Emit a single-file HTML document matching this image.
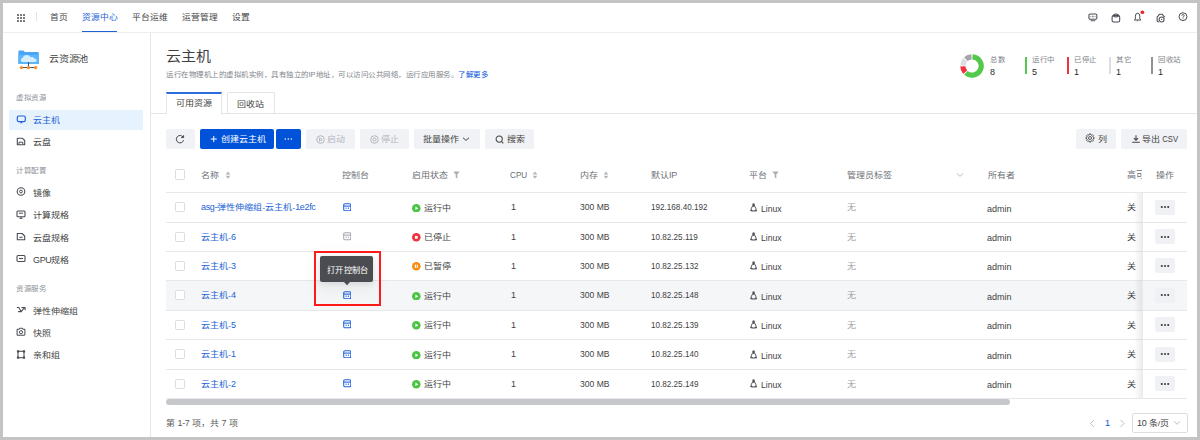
<!DOCTYPE html>
<html lang="zh-CN"><head><meta charset="utf-8">
<style>
*{margin:0;padding:0;box-sizing:border-box;}
html,body{width:1200px;height:440px;overflow:hidden;background:#c4c4c4;}
body{font-family:"Liberation Sans",sans-serif;color:#333;position:relative;}
.a{position:absolute;white-space:nowrap;}
.s{position:absolute;white-space:nowrap;transform:scale(.75);transform-origin:0 0;}
#frame{position:absolute;left:3px;top:3px;width:1194px;height:434px;background:#fff;}
.btn{position:absolute;top:129px;height:20px;background:#f1f2f5;border-radius:2px;}
.cb{position:absolute;left:175px;width:10px;height:10px;border:1px solid #dcdde1;border-radius:1.5px;background:#fff;}
.lt{display:inline-block;transform:scaleY(1.22);transform-origin:0 88%;letter-spacing:-0.45px;}
.dots{position:absolute;left:1155px;width:20px;height:15px;background:#f0f1f4;border-radius:2px;}
</style></head><body>
<div id="frame"></div>

<div class="a" style="left:3px;top:32px;width:1194px;height:1px;background:#eceef1;"></div>
<svg class="a" style="left:17px;top:13.5px;" width="8" height="8" viewBox="0 0 8 8"><g fill="#5a5a5a"><rect x="0.1" y="0.1" width="1.8" height="1.8" rx="0.4"/><rect x="3.1" y="0.1" width="1.8" height="1.8" rx="0.4"/><rect x="6.1" y="0.1" width="1.8" height="1.8" rx="0.4"/><rect x="0.1" y="3.1" width="1.8" height="1.8" rx="0.4"/><rect x="3.1" y="3.1" width="1.8" height="1.8" rx="0.4"/><rect x="6.1" y="3.1" width="1.8" height="1.8" rx="0.4"/><rect x="0.1" y="6.1" width="1.8" height="1.8" rx="0.4"/><rect x="3.1" y="6.1" width="1.8" height="1.8" rx="0.4"/><rect x="6.1" y="6.1" width="1.8" height="1.8" rx="0.4"/></g></svg>
<div class="a" style="left:36px;top:12px;width:1px;height:9px;background:#e2e3e6;"></div>
<div class="s" style="left:49.5px;top:13.38px;font-size:11.7px;line-height:11.7px;color:#444;transform:scale(.75,0.6750);">首页</div>
<div class="s" style="left:82px;top:13.38px;font-size:11.7px;line-height:11.7px;color:#1a62d6;transform:scale(.75,0.6750);">资源中心</div>
<div class="s" style="left:132px;top:13.38px;font-size:11.7px;line-height:11.7px;color:#444;transform:scale(.75,0.6750);">平台运维</div>
<div class="s" style="left:182px;top:13.38px;font-size:11.7px;line-height:11.7px;color:#444;transform:scale(.75,0.6750);">运营管理</div>
<div class="s" style="left:232px;top:13.38px;font-size:11.7px;line-height:11.7px;color:#444;transform:scale(.75,0.6750);">设置</div>
<div class="a" style="left:82px;top:31px;width:35px;height:1.25px;background:#1f62d8;"></div>
<svg class="a" style="left:1087.5px;top:12.5px;" width="10" height="9" viewBox="0 0 10 9"><rect x="0.95" y="0.95" width="7.9" height="5.3" rx="1.3" fill="none" stroke="#4a4d55" stroke-width="1.05"/><rect x="2.6" y="6.2" width="4.7" height="2.1" fill="#7c7f86"/><path d="M2.3 3.6 H3.3 M6.5 3.6 H7.5" stroke="#4a4d55" stroke-width=".7"/><ellipse cx="4.9" cy="3.5" rx=".55" ry="1" fill="#4a4d55"/></svg>
<svg class="a" style="left:1110.5px;top:12.5px;" width="10" height="10" viewBox="0 0 10 10"><g fill="none" stroke="#4a4d55" stroke-width="1.05"><path d="M2.3 3.3 Q2.3 1 4.9 1 Q7.5 1 7.5 3.3"/><rect x="1.1" y="2.6" width="7.6" height="6.3" rx="1.4"/><path d="M2.5 3.3 Q4.9 4.6 7.3 3.3"/></g></svg>
<svg class="a" style="left:1133px;top:10px;" width="13" height="13" viewBox="0 0 13 13"><g fill="none" stroke="#4a4d55" stroke-width="1.0"><path d="M1.3 10 L2.4 8.8 V6.2 Q2.4 3.2 4.6 3.2 Q6.8 3.2 6.8 6.2 V8.8 L7.9 10 Z" stroke-linejoin="round"/></g><path d="M3.8 10.6 L4.6 11.5 L5.4 10.6 Z" fill="#4a4d55"/><circle cx="9.4" cy="2.25" r="1.85" fill="#f5222d"/></svg>
<svg class="a" style="left:1155.5px;top:12.5px;" width="10" height="10" viewBox="0 0 10 10"><g fill="none" stroke="#4a4d55" stroke-width="1.05"><path d="M3.2 9 Q1.1 9 1.1 7.6 V4.3 Q1.1 2.9 2.3 2.9 L3.3 1.3 H6.3 L7.5 2.9 Q8.6 2.9 8.6 4.3"/><circle cx="5.6" cy="6.4" r="2.5"/></g><path d="M4.9 6.4 h1.4" stroke="#4a4d55" stroke-width=".9"/></svg>
<svg class="a" style="left:1177.5px;top:12px;" width="10" height="10" viewBox="0 0 10 10"><circle cx="5" cy="4.65" r="3.95" fill="none" stroke="#4a4d55" stroke-width="1"/><path d="M3.8 3.7 Q3.8 2.5 5 2.5 Q6.2 2.5 6.2 3.6 Q6.2 4.3 5.4 4.7 Q5 4.9 5 5.6" fill="none" stroke="#4a4d55" stroke-width=".9"/><circle cx="5" cy="6.8" r=".5" fill="#4a4d55"/></svg>
<div class="a" style="left:150px;top:33px;width:1px;height:404px;background:#e6e7ea;"></div>
<svg class="a" style="left:17px;top:49px;" width="24" height="21" viewBox="0 0 24 21">
<path d="M1.4 2.4 Q1.4 1.4 2.4 1.4 H6.3 L7.8 2.9 H21 Q21.8 2.9 21.8 3.8 V14.4 Q21.8 15 21.2 15 H2 Q1.4 15 1.4 14.4 Z" fill="#4aa5f6"/>
<path d="M1.4 6 H21.8 V14.4 Q21.8 15 21.2 15 H2 Q1.4 15 1.4 14.4 Z" fill="#5db5fa"/>
<path d="M5.8 13 Q3.8 13 3.8 11.1 Q3.8 9.3 5.8 9.1 Q6.3 6.1 9.9 6.1 Q12.6 6.1 13.6 8.2 Q14.4 7.8 15.4 8 Q16.8 8.3 17.1 9.5 Q19.8 9.6 19.8 11.3 Q19.8 13 17.8 13 Z" fill="#d7eefe"/>
<path d="M11.5 13 V18.5 M4.5 18.5 H18.5" stroke="#4f545c" stroke-width="1.1" fill="none"/>
<circle cx="4.4" cy="18.6" r="1.65" fill="#ff8a1c"/><circle cx="11.5" cy="18.6" r="1.65" fill="#ff8a1c"/><circle cx="18.6" cy="18.6" r="1.65" fill="#ff8a1c"/>
</svg>
<div class="s" style="left:49px;top:55.1px;font-size:13.5px;line-height:13.5px;color:#3f3f3f;transform:scale(.75,0.6750);">云资源池</div>
<div class="a" style="left:9px;top:110px;width:134px;height:20px;background:#e6f3fe;border-radius:1px;"></div>
<div class="s" style="left:16px;top:95.04px;font-size:10px;line-height:10px;color:#8c9099;transform:scale(.75,0.6750);">虚拟资源</div>
<div class="s" style="left:32.6px;top:115.79px;font-size:12px;line-height:12px;color:#1a62d6;transform:scale(.75,0.6750);">云主机</div>
<div class="s" style="left:32.6px;top:138.28px;font-size:12px;line-height:12px;color:#3f3f3f;transform:scale(.75,0.6750);">云盘</div>
<div class="s" style="left:16px;top:168.04px;font-size:10px;line-height:10px;color:#8c9099;transform:scale(.75,0.6750);">计算配置</div>
<div class="s" style="left:32.6px;top:188.78px;font-size:12px;line-height:12px;color:#3f3f3f;transform:scale(.75,0.6750);">镜像</div>
<div class="s" style="left:32.6px;top:211.28px;font-size:12px;line-height:12px;color:#3f3f3f;transform:scale(.75,0.6750);">计算规格</div>
<div class="s" style="left:32.6px;top:233.78px;font-size:12px;line-height:12px;color:#3f3f3f;transform:scale(.75,0.6750);">云盘规格</div>
<div class="s" style="left:32.6px;top:255.78px;font-size:12px;line-height:12px;color:#3f3f3f;transform:scale(.75,0.6750);"><span class="lt">GPU</span>规格</div>
<div class="s" style="left:16px;top:285.54px;font-size:10px;line-height:10px;color:#8c9099;transform:scale(.75,0.6750);">资源服务</div>
<div class="s" style="left:32.6px;top:306.78px;font-size:12px;line-height:12px;color:#3f3f3f;transform:scale(.75,0.6750);">弹性伸缩组</div>
<div class="s" style="left:32.6px;top:328.78px;font-size:12px;line-height:12px;color:#3f3f3f;transform:scale(.75,0.6750);">快照</div>
<div class="s" style="left:32.6px;top:351.28px;font-size:12px;line-height:12px;color:#3f3f3f;transform:scale(.75,0.6750);">亲和组</div>
<svg class="a" style="left:16px;top:115.0px;" width="10" height="9" viewBox="0 0 10 9"><rect x="1.3" y="1" width="8" height="5.6" rx="1.4" fill="none" stroke="#1f5fd8" stroke-width="1.15"/><path d="M4 8.2 L5.3 6.6 L6.6 8.2 Z" fill="#1f5fd8"/></svg>
<svg class="a" style="left:16px;top:136.9px;" width="10" height="9" viewBox="0 0 10 9"><path d="M1.3 1.3 H6.5 L8.7 3.5 V7.7 H1.3 Z" fill="none" stroke="#4a4d55" stroke-width="1.1" stroke-linejoin="round"/><path d="M3 7.7 V5.2 H6.8 V7.7" fill="none" stroke="#4a4d55" stroke-width="1"/></svg>
<svg class="a" style="left:16px;top:187.4px;" width="10" height="9" viewBox="0 0 10 9"><circle cx="5" cy="4.5" r="3.8" fill="none" stroke="#4a4d55" stroke-width="1.1"/><circle cx="5" cy="4.5" r="1.4" fill="none" stroke="#4a4d55" stroke-width="1"/></svg>
<svg class="a" style="left:16px;top:209.9px;" width="10" height="9" viewBox="0 0 10 9"><rect x="1" y="1" width="8" height="5.8" rx="1" fill="none" stroke="#4a4d55" stroke-width="1.1"/><path d="M3.5 8.3 H6.5 M5 6.8 V8.3 M3 3.2 H7" stroke="#4a4d55" stroke-width="1"/></svg>
<svg class="a" style="left:16px;top:232.4px;" width="10" height="9" viewBox="0 0 10 9"><path d="M1.3 1.5 H6 L8.7 4 V7.7 H1.3 Z" fill="none" stroke="#4a4d55" stroke-width="1.1" stroke-linejoin="round"/><path d="M3.3 5.3 H6.7" stroke="#4a4d55" stroke-width="1"/></svg>
<svg class="a" style="left:16px;top:254.4px;" width="10" height="9" viewBox="0 0 10 9"><rect x="1" y="1.5" width="8" height="6" rx="1" fill="none" stroke="#4a4d55" stroke-width="1.1"/><path d="M3 4.5 H7" stroke="#4a4d55" stroke-width="1.1"/></svg>
<svg class="a" style="left:16px;top:305.4px;" width="10" height="9" viewBox="0 0 10 9"><path d="M0.9 2.4 H2.8 L5.2 6.6 M2.1 6.6 H5.5 M5.2 6.6 L8.4 2.6 M5.4 2.4 H9.1 V5.3" fill="none" stroke="#4a4d55" stroke-width="1.05" stroke-linejoin="round"/></svg>
<svg class="a" style="left:16px;top:327.4px;" width="10" height="9" viewBox="0 0 10 9"><path d="M1.1 3 Q1.1 2.3 1.8 2.3 H3 L3.8 1.2 H6.2 L7 2.3 H8.2 Q8.9 2.3 8.9 3 V7.6 Q8.9 8.2 8.2 8.2 H1.8 Q1.1 8.2 1.1 7.6 Z" fill="none" stroke="#4a4d55" stroke-width="1.05" stroke-linejoin="round"/><circle cx="5" cy="5.2" r="1.6" fill="none" stroke="#4a4d55" stroke-width="1"/></svg>
<svg class="a" style="left:16px;top:349.9px;" width="10" height="9" viewBox="0 0 10 9"><rect x="2" y="1.3" width="6" height="6.4" fill="none" stroke="#4a4d55" stroke-width="1.05"/><rect x="0.9" y="0.3" width="2.2" height="2.2" fill="#4a4d55"/><rect x="6.9" y="0.3" width="2.2" height="2.2" fill="#4a4d55"/><rect x="0.9" y="6.5" width="2.2" height="2.2" fill="#4a4d55"/><rect x="6.9" y="6.5" width="2.2" height="2.2" fill="#4a4d55"/></svg>
<div class="s" style="left:166px;top:49.98px;font-size:20px;line-height:20px;color:#3f3f3f;transform:scale(.75,0.6750);">云主机</div>
<div class="s" style="left:166px;top:71.54px;font-size:10px;line-height:10px;color:#80848b;transform:scale(.75,0.6750);">运行在物理机上的虚拟机实例，具有独立的IP地址，可以访问公共网络，运行应用服务。<span style="color:#0052d9">了解更多</span></div>
<svg class="a" style="left:959.2px;top:52.6px;" width="26" height="26" viewBox="0 0 26 26"><path d="M13.481 3.813 A9.2 9.2 0 1 1 6.844 19.837" fill="none" stroke="#52c94a" stroke-width="5.2"/><path d="M6.163 19.156 A9.2 9.2 0 0 1 3.813 13.481" fill="none" stroke="#f0313f" stroke-width="5.2"/><path d="M3.813 12.519 A9.2 9.2 0 0 1 6.163 6.844" fill="none" stroke="#dcdde1" stroke-width="5.2"/><path d="M6.844 6.163 A9.2 9.2 0 0 1 12.519 3.813" fill="none" stroke="#a3a5aa" stroke-width="5.2"/></svg>
<div class="s" style="left:990px;top:57.04px;font-size:10px;line-height:10px;color:#80848b;transform:scale(.75,0.6750);">总数</div>
<div class="s" style="left:990px;top:67.59px;font-size:12px;line-height:12px;color:#2a2a2a;transform:scale(.75,0.6750);font-weight:500;"><span class="lt">8</span></div>
<div class="a" style="left:1025px;top:57px;width:2px;height:17px;background:#52c94a;"></div>
<div class="s" style="left:1032px;top:57.04px;font-size:10px;line-height:10px;color:#80848b;transform:scale(.75,0.6750);">运行中</div>
<div class="s" style="left:1032px;top:67.59px;font-size:12px;line-height:12px;color:#2a2a2a;transform:scale(.75,0.6750);font-weight:500;"><span class="lt">5</span></div>
<div class="a" style="left:1067px;top:57px;width:2px;height:17px;background:#f0313f;"></div>
<div class="s" style="left:1074px;top:57.04px;font-size:10px;line-height:10px;color:#80848b;transform:scale(.75,0.6750);">已停止</div>
<div class="s" style="left:1074px;top:67.59px;font-size:12px;line-height:12px;color:#2a2a2a;transform:scale(.75,0.6750);font-weight:500;"><span class="lt">1</span></div>
<div class="a" style="left:1109px;top:57px;width:2px;height:17px;background:#dcdde1;"></div>
<div class="s" style="left:1116px;top:57.04px;font-size:10px;line-height:10px;color:#80848b;transform:scale(.75,0.6750);">其它</div>
<div class="s" style="left:1116px;top:67.59px;font-size:12px;line-height:12px;color:#2a2a2a;transform:scale(.75,0.6750);font-weight:500;"><span class="lt">1</span></div>
<div class="a" style="left:1151px;top:57px;width:2px;height:17px;background:#909297;"></div>
<div class="s" style="left:1158px;top:57.04px;font-size:10px;line-height:10px;color:#80848b;transform:scale(.75,0.6750);">回收站</div>
<div class="s" style="left:1158px;top:67.59px;font-size:12px;line-height:12px;color:#2a2a2a;transform:scale(.75,0.6750);font-weight:500;"><span class="lt">1</span></div>
<div class="a" style="left:151px;top:112.5px;width:1046px;height:1px;background:#e3e4e8;"></div>
<div class="a" style="left:166px;top:92px;width:56px;height:21.5px;background:#fff;border:1px solid #e3e4e8;border-bottom:none;border-top:2px solid #2a6ddb;"></div>
<div class="s" style="left:176px;top:99.39px;font-size:12px;line-height:12px;color:#3f3f3f;transform:scale(.75,0.6750);">可用资源</div>
<div class="a" style="left:227px;top:92.3px;width:48px;height:21px;background:#fff;border:1px solid #e3e4e8;border-bottom:none;border-radius:2px 2px 0 0;"></div>
<div class="s" style="left:236.5px;top:99.59px;font-size:12px;line-height:12px;color:#3f3f3f;transform:scale(.75,0.6750);">回收站</div>
<div class="btn" style="left:166px;width:28.5px;background:#f1f2f5;"></div>
<svg class="a" style="left:175px;top:134px;" width="10" height="10" viewBox="0 0 10 10"><path d="M8.1 3.1 A3.7 3.7 0 1 0 8.6 6.2" fill="none" stroke="#444" stroke-width="1"/><path d="M8.6 1.2 V3.6 H6.2" fill="none" stroke="#444" stroke-width="1"/></svg>
<div class="btn" style="left:199.7px;width:74.7px;background:#0052d9;"></div>
<svg class="a" style="left:210px;top:134px;" width="8" height="10" viewBox="0 0 8 10"><path d="M3.75 1.9 V8.1 M0.7 5 H6.8" stroke="#fff" stroke-width="1"/></svg>
<div class="s" style="left:221.3px;top:134.58px;font-size:12px;line-height:12px;color:#fff;transform:scale(.75,0.6750);">创建云主机</div>
<div class="btn" style="left:276px;width:24.7px;background:#0052d9;"></div>
<svg class="a" style="left:282px;top:136px;" width="13" height="6" viewBox="0 0 13 6"><circle cx="3.3" cy="3" r="0.8" fill="#fff"/><circle cx="6.3" cy="3" r="0.8" fill="#fff"/><circle cx="9.3" cy="3" r="0.8" fill="#fff"/></svg>
<div class="btn" style="left:306px;width:48.6px;background:#f1f2f5;"></div>
<svg class="a" style="left:315.5px;top:134.5px;" width="9" height="9" viewBox="0 0 9 9"><circle cx="4.5" cy="4.5" r="3.8" fill="none" stroke="#b3b6bd" stroke-width="1"/><path d="M3.5 2.8 L6.3 4.5 L3.5 6.2 Z" fill="none" stroke="#b3b6bd" stroke-width=".9" stroke-linejoin="round"/></svg>
<div class="s" style="left:327px;top:134.58px;font-size:12px;line-height:12px;color:#b3b6bd;transform:scale(.75,0.6750);">启动</div>
<div class="btn" style="left:360px;width:48.6px;background:#f1f2f5;"></div>
<svg class="a" style="left:369.5px;top:134.5px;" width="9" height="9" viewBox="0 0 9 9"><circle cx="4.5" cy="4.5" r="3.8" fill="none" stroke="#b3b6bd" stroke-width="1"/><circle cx="4.5" cy="4.5" r="1.6" fill="none" stroke="#b3b6bd" stroke-width="1"/></svg>
<div class="s" style="left:381px;top:134.58px;font-size:12px;line-height:12px;color:#b3b6bd;transform:scale(.75,0.6750);">停止</div>
<div class="btn" style="left:413.6px;width:66px;background:#f1f2f5;"></div>
<div class="s" style="left:423px;top:134.58px;font-size:12px;line-height:12px;color:#3f3f3f;transform:scale(.75,0.6750);">批量操作</div>
<svg class="a" style="left:461.5px;top:136px;" width="8" height="6" viewBox="0 0 8 6"><path d="M1 1.7 L4 4.4 L7 1.7" fill="none" stroke="#444" stroke-width="1"/></svg>
<div class="btn" style="left:485px;width:48.6px;background:#f1f2f5;"></div>
<svg class="a" style="left:494.5px;top:134.5px;" width="10" height="10" viewBox="0 0 10 10"><circle cx="4.2" cy="4.1" r="3.1" fill="none" stroke="#444" stroke-width="1.05"/><path d="M6.4 6.4 L8.3 8.3" stroke="#444" stroke-width="1.1"/></svg>
<div class="s" style="left:506.7px;top:134.58px;font-size:12px;line-height:12px;color:#3f3f3f;transform:scale(.75,0.6750);">搜索</div>
<div class="btn" style="left:1075.75px;width:40px;background:#f1f2f5;"></div>
<svg class="a" style="left:1085px;top:133.4px;" width="10" height="10" viewBox="0 0 10 10"><path d="M4.36 0.95 L5.64 0.95 L5.67 1.72 L6.85 2.21 L7.41 1.68 L8.32 2.59 L7.79 3.15 L8.28 4.33 L9.05 4.36 L9.05 5.64 L8.28 5.67 L7.79 6.85 L8.32 7.41 L7.41 8.32 L6.85 7.79 L5.67 8.28 L5.64 9.05 L4.36 9.05 L4.33 8.28 L3.15 7.79 L2.59 8.32 L1.68 7.41 L2.21 6.85 L1.72 5.67 L0.95 5.64 L0.95 4.36 L1.72 4.33 L2.21 3.15 L1.68 2.59 L2.59 1.68 L3.15 2.21 L4.33 1.72 Z" fill="none" stroke="#4a4a4a" stroke-width="0.95" stroke-linejoin="round"/><circle cx="5" cy="5" r="1.5" fill="none" stroke="#4a4a4a" stroke-width="0.9"/></svg>
<div class="s" style="left:1097.5px;top:134.58px;font-size:12px;line-height:12px;color:#3f3f3f;transform:scale(.75,0.6750);">列</div>
<div class="btn" style="left:1121px;width:66.4px;background:#f1f2f5;"></div>
<svg class="a" style="left:1130.5px;top:133.6px;" width="10" height="10" viewBox="0 0 10 10"><path d="M5 1.3 V6.2 M2.9 4.1 L5 6.2 L7.1 4.1 M1.2 8.3 H8.8" fill="none" stroke="#444" stroke-width="1.05"/></svg>
<div class="s" style="left:1142.3px;top:134.58px;font-size:12px;line-height:12px;color:#3f3f3f;transform:scale(.75,0.6750);">导出 <span style="display:inline-block;transform:scale(.86,1.22);transform-origin:0 88%;">CSV</span></div>
<div class="cb" style="top:169px;height:10.5px;"></div>
<div class="s" style="left:201.3px;top:170.78px;font-size:12px;line-height:12px;color:#6b6e75;transform:scale(.75,0.6750);">名称</div>
<svg class="a" style="left:224.5px;top:170.7px;" width="6" height="8.5" viewBox="0 0 6 8.5"><path d="M0.6 3.4 L3 0.4 L5.4 3.4 Z M0.6 4.7 L3 7.7 L5.4 4.7 Z" fill="#b3b6bc"/></svg>
<div class="s" style="left:342px;top:170.78px;font-size:12px;line-height:12px;color:#6b6e75;transform:scale(.75,0.6750);">控制台</div>
<div class="s" style="left:412px;top:170.78px;font-size:12px;line-height:12px;color:#6b6e75;transform:scale(.75,0.6750);">启用状态</div>
<svg class="a" style="left:452.8px;top:170.89999999999998px;" width="7" height="8" viewBox="0 0 7 8"><path d="M0.3 0.4 H6.7 L4.3 3.6 V7.4 L2.7 6.4 V3.6 Z" fill="#a9acb2"/></svg>
<div class="s" style="left:510px;top:169.75px;font-size:12px;line-height:12px;color:#6b6e75;transform:scale(0.6795,0.8250);">CPU</div>
<svg class="a" style="left:531.5px;top:170.7px;" width="6" height="8.5" viewBox="0 0 6 8.5"><path d="M0.6 3.4 L3 0.4 L5.4 3.4 Z M0.6 4.7 L3 7.7 L5.4 4.7 Z" fill="#b3b6bc"/></svg>
<div class="s" style="left:580px;top:170.78px;font-size:12px;line-height:12px;color:#6b6e75;transform:scale(.75,0.6750);">内存</div>
<svg class="a" style="left:602.5px;top:170.7px;" width="6" height="8.5" viewBox="0 0 6 8.5"><path d="M0.6 3.4 L3 0.4 L5.4 3.4 Z M0.6 4.7 L3 7.7 L5.4 4.7 Z" fill="#b3b6bc"/></svg>
<div class="s" style="left:651px;top:170.78px;font-size:12px;line-height:12px;color:#6b6e75;transform:scale(.75,0.6750);">默认<span class="lt">IP</span></div>
<div class="s" style="left:748.7px;top:170.78px;font-size:12px;line-height:12px;color:#6b6e75;transform:scale(.75,0.6750);">平台</div>
<svg class="a" style="left:772px;top:170.89999999999998px;" width="7" height="8" viewBox="0 0 7 8"><path d="M0.3 0.4 H6.7 L4.3 3.6 V7.4 L2.7 6.4 V3.6 Z" fill="#a9acb2"/></svg>
<div class="s" style="left:847.4px;top:170.78px;font-size:12px;line-height:12px;color:#6b6e75;transform:scale(.75,0.6750);">管理员标签</div>
<svg class="a" style="left:955.5px;top:171.7px;" width="8" height="6" viewBox="0 0 8 6"><path d="M1 1.5 L4 4.3 L7 1.5" fill="none" stroke="#b3b6bc" stroke-width=".9"/></svg>
<div class="s" style="left:987.7px;top:170.78px;font-size:12px;line-height:12px;color:#6b6e75;transform:scale(.75,0.6750);">所有者</div>
<div class="a" style="left:1127.3px;top:169.7px;width:15.2px;height:10px;overflow:hidden;"><div class="s" style="left:0;top:0.5px;font-size:12px;line-height:12px;color:#6b6e75;">高可用</div></div>
<div class="s" style="left:1156px;top:170.78px;font-size:12px;line-height:12px;color:#6b6e75;transform:scale(.75,0.6750);">操作</div>
<div class="a" style="left:166px;top:280.5px;width:1021px;height:29.5px;background:#f5f6f8;"></div>
<div class="a" style="left:166px;top:192px;width:1021px;height:1px;background:#e7e8eb;"></div>
<div class="a" style="left:166px;top:222px;width:1021px;height:1px;background:#e7e8eb;"></div>
<div class="a" style="left:166px;top:251px;width:1021px;height:1px;background:#e7e8eb;"></div>
<div class="a" style="left:166px;top:280px;width:1021px;height:1px;background:#e7e8eb;"></div>
<div class="a" style="left:166px;top:310px;width:1021px;height:1px;background:#e7e8eb;"></div>
<div class="a" style="left:166px;top:339px;width:1021px;height:1px;background:#e7e8eb;"></div>
<div class="a" style="left:166px;top:369px;width:1021px;height:1px;background:#e7e8eb;"></div>
<div class="a" style="left:166px;top:398px;width:1021px;height:1px;background:#e7e8eb;"></div>
<div class="cb" style="top:202.2px;"></div>
<div class="s" style="left:201.3px;top:203.28px;font-size:12px;line-height:12px;color:#1a62d6;transform:scale(.75,0.6750);"><span class="lt">asg-</span>弹性伸缩组-云主机-<span class="lt">1e2fc</span></div>
<svg class="a" style="left:342.5px;top:202.5px;" width="8.5" height="8.5" viewBox="0 0 8.5 8.5"><rect x="0.7" y="0.7" width="7.1" height="7.1" rx="1.3" fill="none" stroke="#2563dc" stroke-width="1.05"/><path d="M0.7 3.1 H7.8" stroke="#2563dc" stroke-width="1.1"/><path d="M3.1 4.6 V5.9 M5.4 4.6 V5.9" stroke="#2563dc" stroke-width="1"/></svg>
<svg class="a" style="left:412.2px;top:203.7px;" width="8.6" height="8.6" viewBox="0 0 8.6 8.6"><circle cx="4.3" cy="4.3" r="4.3" fill="#4cc443"/><path d="M3.4 2.6 L6.3 4.3 L3.4 6 Z" fill="#fff"/></svg>
<div class="s" style="left:424px;top:203.58px;font-size:12px;line-height:12px;color:#3f3f3f;transform:scale(.75,0.6750);">运行中</div>
<div class="s" style="left:510.5px;top:202.25px;font-size:12px;line-height:12px;color:#3f3f3f;transform:scale(0.7500,0.8250);">1</div>
<div class="s" style="left:580px;top:202.25px;font-size:12px;line-height:12px;color:#3f3f3f;transform:scale(0.7125,0.8250);">300 MB</div>
<div class="s" style="left:651px;top:202.25px;font-size:12px;line-height:12px;color:#3f3f3f;transform:scale(0.6773,0.8250);">192.168.40.192</div>
<svg class="a" style="left:749.5px;top:202.89999999999998px;" width="7.5" height="9" viewBox="0 0 7.5 9"><ellipse cx="3.6" cy="2.1" rx="1.35" ry="1.9" fill="#50535a"/><path d="M2.5 3.2 Q1.1 5.2 1 7.2 M4.7 3.2 Q6.1 5.2 6.2 7.2 M2 8 H5.2" fill="none" stroke="#50535a" stroke-width="1"/><ellipse cx="1.4" cy="7.6" rx="1.3" ry="0.8" fill="#50535a"/><ellipse cx="5.8" cy="7.6" rx="1.3" ry="0.8" fill="#50535a"/></svg>
<div class="s" style="left:761px;top:203.9px;font-size:12px;line-height:12px;color:#3f3f3f;transform:scale(0.7200,0.7500);">Linux</div>
<div class="s" style="left:847.4px;top:203.28px;font-size:12px;line-height:12px;color:#9a9da3;transform:scale(.75,0.6750);">无</div>
<div class="s" style="left:987px;top:203.9px;font-size:12px;line-height:12px;color:#3f3f3f;transform:scale(0.7500,0.7500);">admin</div>
<div class="s" style="left:1127px;top:203.28px;font-size:12px;line-height:12px;color:#3f3f3f;transform:scale(.75,0.6750);">关</div>
<div class="dots" style="top:199.89999999999998px;"></div>
<svg class="a" style="left:1159px;top:205.0px;" width="12" height="4" viewBox="0 0 12 4"><rect x="1.9" y="1.1" width="1.8" height="1.8" rx=".4" fill="#444"/><rect x="5.1" y="1.1" width="1.8" height="1.8" rx=".4" fill="#444"/><rect x="8.3" y="1.1" width="1.8" height="1.8" rx=".4" fill="#444"/></svg>
<div class="cb" style="top:231.7px;"></div>
<div class="s" style="left:201.3px;top:232.78px;font-size:12px;line-height:12px;color:#1a62d6;transform:scale(.75,0.6750);">云主机-<span class="lt">6</span></div>
<svg class="a" style="left:342.5px;top:232.0px;" width="8.5" height="8.5" viewBox="0 0 8.5 8.5"><rect x="0.7" y="0.7" width="7.1" height="7.1" rx="1.3" fill="none" stroke="#a5a8ae" stroke-width="1.05"/><path d="M0.7 3.1 H7.8" stroke="#a5a8ae" stroke-width="1.1"/><path d="M3.1 4.6 V5.9 M5.4 4.6 V5.9" stroke="#a5a8ae" stroke-width="1"/></svg>
<svg class="a" style="left:412.2px;top:233.2px;" width="8.6" height="8.6" viewBox="0 0 8.6 8.6"><circle cx="4.3" cy="4.3" r="4.3" fill="#f0313f"/><rect x="2.9" y="2.9" width="2.8" height="2.8" fill="#fff"/></svg>
<div class="s" style="left:424px;top:233.08px;font-size:12px;line-height:12px;color:#3f3f3f;transform:scale(.75,0.6750);">已停止</div>
<div class="s" style="left:510.5px;top:231.75px;font-size:12px;line-height:12px;color:#3f3f3f;transform:scale(0.7500,0.8250);">1</div>
<div class="s" style="left:580px;top:231.75px;font-size:12px;line-height:12px;color:#3f3f3f;transform:scale(0.7125,0.8250);">300 MB</div>
<div class="s" style="left:651px;top:231.75px;font-size:12px;line-height:12px;color:#3f3f3f;transform:scale(0.6773,0.8250);">10.82.25.119</div>
<svg class="a" style="left:749.5px;top:232.39999999999998px;" width="7.5" height="9" viewBox="0 0 7.5 9"><ellipse cx="3.6" cy="2.1" rx="1.35" ry="1.9" fill="#50535a"/><path d="M2.5 3.2 Q1.1 5.2 1 7.2 M4.7 3.2 Q6.1 5.2 6.2 7.2 M2 8 H5.2" fill="none" stroke="#50535a" stroke-width="1"/><ellipse cx="1.4" cy="7.6" rx="1.3" ry="0.8" fill="#50535a"/><ellipse cx="5.8" cy="7.6" rx="1.3" ry="0.8" fill="#50535a"/></svg>
<div class="s" style="left:761px;top:233.4px;font-size:12px;line-height:12px;color:#3f3f3f;transform:scale(0.7200,0.7500);">Linux</div>
<div class="s" style="left:847.4px;top:232.78px;font-size:12px;line-height:12px;color:#9a9da3;transform:scale(.75,0.6750);">无</div>
<div class="s" style="left:987px;top:233.4px;font-size:12px;line-height:12px;color:#3f3f3f;transform:scale(0.7500,0.7500);">admin</div>
<div class="s" style="left:1127px;top:232.78px;font-size:12px;line-height:12px;color:#3f3f3f;transform:scale(.75,0.6750);">关</div>
<div class="dots" style="top:229.39999999999998px;"></div>
<svg class="a" style="left:1159px;top:234.5px;" width="12" height="4" viewBox="0 0 12 4"><rect x="1.9" y="1.1" width="1.8" height="1.8" rx=".4" fill="#444"/><rect x="5.1" y="1.1" width="1.8" height="1.8" rx=".4" fill="#444"/><rect x="8.3" y="1.1" width="1.8" height="1.8" rx=".4" fill="#444"/></svg>
<div class="cb" style="top:260.7px;"></div>
<div class="s" style="left:201.3px;top:261.78px;font-size:12px;line-height:12px;color:#1a62d6;transform:scale(.75,0.6750);">云主机-<span class="lt">3</span></div>
<svg class="a" style="left:342.5px;top:261.0px;" width="8.5" height="8.5" viewBox="0 0 8.5 8.5"><rect x="0.7" y="0.7" width="7.1" height="7.1" rx="1.3" fill="none" stroke="#2563dc" stroke-width="1.05"/><path d="M0.7 3.1 H7.8" stroke="#2563dc" stroke-width="1.1"/><path d="M3.1 4.6 V5.9 M5.4 4.6 V5.9" stroke="#2563dc" stroke-width="1"/></svg>
<svg class="a" style="left:412.2px;top:262.2px;" width="8.6" height="8.6" viewBox="0 0 8.6 8.6"><circle cx="4.3" cy="4.3" r="4.3" fill="#f88b12"/><rect x="2.8" y="2.6" width="1.1" height="3.4" fill="#fff"/><rect x="4.7" y="2.6" width="1.1" height="3.4" fill="#fff"/></svg>
<div class="s" style="left:424px;top:262.08px;font-size:12px;line-height:12px;color:#3f3f3f;transform:scale(.75,0.6750);">已暂停</div>
<div class="s" style="left:510.5px;top:260.75px;font-size:12px;line-height:12px;color:#3f3f3f;transform:scale(0.7500,0.8250);">1</div>
<div class="s" style="left:580px;top:260.75px;font-size:12px;line-height:12px;color:#3f3f3f;transform:scale(0.7125,0.8250);">300 MB</div>
<div class="s" style="left:651px;top:260.75px;font-size:12px;line-height:12px;color:#3f3f3f;transform:scale(0.6773,0.8250);">10.82.25.132</div>
<svg class="a" style="left:749.5px;top:261.4px;" width="7.5" height="9" viewBox="0 0 7.5 9"><ellipse cx="3.6" cy="2.1" rx="1.35" ry="1.9" fill="#50535a"/><path d="M2.5 3.2 Q1.1 5.2 1 7.2 M4.7 3.2 Q6.1 5.2 6.2 7.2 M2 8 H5.2" fill="none" stroke="#50535a" stroke-width="1"/><ellipse cx="1.4" cy="7.6" rx="1.3" ry="0.8" fill="#50535a"/><ellipse cx="5.8" cy="7.6" rx="1.3" ry="0.8" fill="#50535a"/></svg>
<div class="s" style="left:761px;top:262.4px;font-size:12px;line-height:12px;color:#3f3f3f;transform:scale(0.7200,0.7500);">Linux</div>
<div class="s" style="left:847.4px;top:261.78px;font-size:12px;line-height:12px;color:#9a9da3;transform:scale(.75,0.6750);">无</div>
<div class="s" style="left:987px;top:262.4px;font-size:12px;line-height:12px;color:#3f3f3f;transform:scale(0.7500,0.7500);">admin</div>
<div class="s" style="left:1127px;top:261.78px;font-size:12px;line-height:12px;color:#3f3f3f;transform:scale(.75,0.6750);">关</div>
<div class="dots" style="top:258.4px;"></div>
<svg class="a" style="left:1159px;top:263.5px;" width="12" height="4" viewBox="0 0 12 4"><rect x="1.9" y="1.1" width="1.8" height="1.8" rx=".4" fill="#444"/><rect x="5.1" y="1.1" width="1.8" height="1.8" rx=".4" fill="#444"/><rect x="8.3" y="1.1" width="1.8" height="1.8" rx=".4" fill="#444"/></svg>
<div class="cb" style="top:290.2px;"></div>
<div class="s" style="left:201.3px;top:291.28px;font-size:12px;line-height:12px;color:#1a62d6;transform:scale(.75,0.6750);">云主机-<span class="lt">4</span></div>
<svg class="a" style="left:342.5px;top:290.5px;" width="8.5" height="8.5" viewBox="0 0 8.5 8.5"><rect x="0.7" y="0.7" width="7.1" height="7.1" rx="1.3" fill="none" stroke="#2563dc" stroke-width="1.05"/><path d="M0.7 3.1 H7.8" stroke="#2563dc" stroke-width="1.1"/><path d="M3.1 4.6 V5.9 M5.4 4.6 V5.9" stroke="#2563dc" stroke-width="1"/></svg>
<svg class="a" style="left:412.2px;top:291.7px;" width="8.6" height="8.6" viewBox="0 0 8.6 8.6"><circle cx="4.3" cy="4.3" r="4.3" fill="#4cc443"/><path d="M3.4 2.6 L6.3 4.3 L3.4 6 Z" fill="#fff"/></svg>
<div class="s" style="left:424px;top:291.58px;font-size:12px;line-height:12px;color:#3f3f3f;transform:scale(.75,0.6750);">运行中</div>
<div class="s" style="left:510.5px;top:290.25px;font-size:12px;line-height:12px;color:#3f3f3f;transform:scale(0.7500,0.8250);">1</div>
<div class="s" style="left:580px;top:290.25px;font-size:12px;line-height:12px;color:#3f3f3f;transform:scale(0.7125,0.8250);">300 MB</div>
<div class="s" style="left:651px;top:290.25px;font-size:12px;line-height:12px;color:#3f3f3f;transform:scale(0.6773,0.8250);">10.82.25.148</div>
<svg class="a" style="left:749.5px;top:290.9px;" width="7.5" height="9" viewBox="0 0 7.5 9"><ellipse cx="3.6" cy="2.1" rx="1.35" ry="1.9" fill="#50535a"/><path d="M2.5 3.2 Q1.1 5.2 1 7.2 M4.7 3.2 Q6.1 5.2 6.2 7.2 M2 8 H5.2" fill="none" stroke="#50535a" stroke-width="1"/><ellipse cx="1.4" cy="7.6" rx="1.3" ry="0.8" fill="#50535a"/><ellipse cx="5.8" cy="7.6" rx="1.3" ry="0.8" fill="#50535a"/></svg>
<div class="s" style="left:761px;top:291.9px;font-size:12px;line-height:12px;color:#3f3f3f;transform:scale(0.7200,0.7500);">Linux</div>
<div class="s" style="left:847.4px;top:291.28px;font-size:12px;line-height:12px;color:#9a9da3;transform:scale(.75,0.6750);">无</div>
<div class="s" style="left:987px;top:291.9px;font-size:12px;line-height:12px;color:#3f3f3f;transform:scale(0.7500,0.7500);">admin</div>
<div class="s" style="left:1127px;top:291.28px;font-size:12px;line-height:12px;color:#3f3f3f;transform:scale(.75,0.6750);">关</div>
<div class="dots" style="top:287.9px;"></div>
<svg class="a" style="left:1159px;top:293.0px;" width="12" height="4" viewBox="0 0 12 4"><rect x="1.9" y="1.1" width="1.8" height="1.8" rx=".4" fill="#444"/><rect x="5.1" y="1.1" width="1.8" height="1.8" rx=".4" fill="#444"/><rect x="8.3" y="1.1" width="1.8" height="1.8" rx=".4" fill="#444"/></svg>
<div class="cb" style="top:319.7px;"></div>
<div class="s" style="left:201.3px;top:320.78px;font-size:12px;line-height:12px;color:#1a62d6;transform:scale(.75,0.6750);">云主机-<span class="lt">5</span></div>
<svg class="a" style="left:342.5px;top:320.0px;" width="8.5" height="8.5" viewBox="0 0 8.5 8.5"><rect x="0.7" y="0.7" width="7.1" height="7.1" rx="1.3" fill="none" stroke="#2563dc" stroke-width="1.05"/><path d="M0.7 3.1 H7.8" stroke="#2563dc" stroke-width="1.1"/><path d="M3.1 4.6 V5.9 M5.4 4.6 V5.9" stroke="#2563dc" stroke-width="1"/></svg>
<svg class="a" style="left:412.2px;top:321.2px;" width="8.6" height="8.6" viewBox="0 0 8.6 8.6"><circle cx="4.3" cy="4.3" r="4.3" fill="#4cc443"/><path d="M3.4 2.6 L6.3 4.3 L3.4 6 Z" fill="#fff"/></svg>
<div class="s" style="left:424px;top:321.08px;font-size:12px;line-height:12px;color:#3f3f3f;transform:scale(.75,0.6750);">运行中</div>
<div class="s" style="left:510.5px;top:319.75px;font-size:12px;line-height:12px;color:#3f3f3f;transform:scale(0.7500,0.8250);">1</div>
<div class="s" style="left:580px;top:319.75px;font-size:12px;line-height:12px;color:#3f3f3f;transform:scale(0.7125,0.8250);">300 MB</div>
<div class="s" style="left:651px;top:319.75px;font-size:12px;line-height:12px;color:#3f3f3f;transform:scale(0.6773,0.8250);">10.82.25.139</div>
<svg class="a" style="left:749.5px;top:320.4px;" width="7.5" height="9" viewBox="0 0 7.5 9"><ellipse cx="3.6" cy="2.1" rx="1.35" ry="1.9" fill="#50535a"/><path d="M2.5 3.2 Q1.1 5.2 1 7.2 M4.7 3.2 Q6.1 5.2 6.2 7.2 M2 8 H5.2" fill="none" stroke="#50535a" stroke-width="1"/><ellipse cx="1.4" cy="7.6" rx="1.3" ry="0.8" fill="#50535a"/><ellipse cx="5.8" cy="7.6" rx="1.3" ry="0.8" fill="#50535a"/></svg>
<div class="s" style="left:761px;top:321.4px;font-size:12px;line-height:12px;color:#3f3f3f;transform:scale(0.7200,0.7500);">Linux</div>
<div class="s" style="left:847.4px;top:320.78px;font-size:12px;line-height:12px;color:#9a9da3;transform:scale(.75,0.6750);">无</div>
<div class="s" style="left:987px;top:321.4px;font-size:12px;line-height:12px;color:#3f3f3f;transform:scale(0.7500,0.7500);">admin</div>
<div class="s" style="left:1127px;top:320.78px;font-size:12px;line-height:12px;color:#3f3f3f;transform:scale(.75,0.6750);">关</div>
<div class="dots" style="top:317.4px;"></div>
<svg class="a" style="left:1159px;top:322.5px;" width="12" height="4" viewBox="0 0 12 4"><rect x="1.9" y="1.1" width="1.8" height="1.8" rx=".4" fill="#444"/><rect x="5.1" y="1.1" width="1.8" height="1.8" rx=".4" fill="#444"/><rect x="8.3" y="1.1" width="1.8" height="1.8" rx=".4" fill="#444"/></svg>
<div class="cb" style="top:349.2px;"></div>
<div class="s" style="left:201.3px;top:350.28px;font-size:12px;line-height:12px;color:#1a62d6;transform:scale(.75,0.6750);">云主机-<span class="lt">1</span></div>
<svg class="a" style="left:342.5px;top:349.5px;" width="8.5" height="8.5" viewBox="0 0 8.5 8.5"><rect x="0.7" y="0.7" width="7.1" height="7.1" rx="1.3" fill="none" stroke="#2563dc" stroke-width="1.05"/><path d="M0.7 3.1 H7.8" stroke="#2563dc" stroke-width="1.1"/><path d="M3.1 4.6 V5.9 M5.4 4.6 V5.9" stroke="#2563dc" stroke-width="1"/></svg>
<svg class="a" style="left:412.2px;top:350.7px;" width="8.6" height="8.6" viewBox="0 0 8.6 8.6"><circle cx="4.3" cy="4.3" r="4.3" fill="#4cc443"/><path d="M3.4 2.6 L6.3 4.3 L3.4 6 Z" fill="#fff"/></svg>
<div class="s" style="left:424px;top:350.58px;font-size:12px;line-height:12px;color:#3f3f3f;transform:scale(.75,0.6750);">运行中</div>
<div class="s" style="left:510.5px;top:349.25px;font-size:12px;line-height:12px;color:#3f3f3f;transform:scale(0.7500,0.8250);">1</div>
<div class="s" style="left:580px;top:349.25px;font-size:12px;line-height:12px;color:#3f3f3f;transform:scale(0.7125,0.8250);">300 MB</div>
<div class="s" style="left:651px;top:349.25px;font-size:12px;line-height:12px;color:#3f3f3f;transform:scale(0.6773,0.8250);">10.82.25.140</div>
<svg class="a" style="left:749.5px;top:349.9px;" width="7.5" height="9" viewBox="0 0 7.5 9"><ellipse cx="3.6" cy="2.1" rx="1.35" ry="1.9" fill="#50535a"/><path d="M2.5 3.2 Q1.1 5.2 1 7.2 M4.7 3.2 Q6.1 5.2 6.2 7.2 M2 8 H5.2" fill="none" stroke="#50535a" stroke-width="1"/><ellipse cx="1.4" cy="7.6" rx="1.3" ry="0.8" fill="#50535a"/><ellipse cx="5.8" cy="7.6" rx="1.3" ry="0.8" fill="#50535a"/></svg>
<div class="s" style="left:761px;top:350.9px;font-size:12px;line-height:12px;color:#3f3f3f;transform:scale(0.7200,0.7500);">Linux</div>
<div class="s" style="left:847.4px;top:350.28px;font-size:12px;line-height:12px;color:#9a9da3;transform:scale(.75,0.6750);">无</div>
<div class="s" style="left:987px;top:350.9px;font-size:12px;line-height:12px;color:#3f3f3f;transform:scale(0.7500,0.7500);">admin</div>
<div class="s" style="left:1127px;top:350.28px;font-size:12px;line-height:12px;color:#3f3f3f;transform:scale(.75,0.6750);">关</div>
<div class="dots" style="top:346.9px;"></div>
<svg class="a" style="left:1159px;top:352.0px;" width="12" height="4" viewBox="0 0 12 4"><rect x="1.9" y="1.1" width="1.8" height="1.8" rx=".4" fill="#444"/><rect x="5.1" y="1.1" width="1.8" height="1.8" rx=".4" fill="#444"/><rect x="8.3" y="1.1" width="1.8" height="1.8" rx=".4" fill="#444"/></svg>
<div class="cb" style="top:378.7px;"></div>
<div class="s" style="left:201.3px;top:379.78px;font-size:12px;line-height:12px;color:#1a62d6;transform:scale(.75,0.6750);">云主机-<span class="lt">2</span></div>
<svg class="a" style="left:342.5px;top:379.0px;" width="8.5" height="8.5" viewBox="0 0 8.5 8.5"><rect x="0.7" y="0.7" width="7.1" height="7.1" rx="1.3" fill="none" stroke="#2563dc" stroke-width="1.05"/><path d="M0.7 3.1 H7.8" stroke="#2563dc" stroke-width="1.1"/><path d="M3.1 4.6 V5.9 M5.4 4.6 V5.9" stroke="#2563dc" stroke-width="1"/></svg>
<svg class="a" style="left:412.2px;top:380.2px;" width="8.6" height="8.6" viewBox="0 0 8.6 8.6"><circle cx="4.3" cy="4.3" r="4.3" fill="#4cc443"/><path d="M3.4 2.6 L6.3 4.3 L3.4 6 Z" fill="#fff"/></svg>
<div class="s" style="left:424px;top:380.08px;font-size:12px;line-height:12px;color:#3f3f3f;transform:scale(.75,0.6750);">运行中</div>
<div class="s" style="left:510.5px;top:378.75px;font-size:12px;line-height:12px;color:#3f3f3f;transform:scale(0.7500,0.8250);">1</div>
<div class="s" style="left:580px;top:378.75px;font-size:12px;line-height:12px;color:#3f3f3f;transform:scale(0.7125,0.8250);">300 MB</div>
<div class="s" style="left:651px;top:378.75px;font-size:12px;line-height:12px;color:#3f3f3f;transform:scale(0.6773,0.8250);">10.82.25.149</div>
<svg class="a" style="left:749.5px;top:379.4px;" width="7.5" height="9" viewBox="0 0 7.5 9"><ellipse cx="3.6" cy="2.1" rx="1.35" ry="1.9" fill="#50535a"/><path d="M2.5 3.2 Q1.1 5.2 1 7.2 M4.7 3.2 Q6.1 5.2 6.2 7.2 M2 8 H5.2" fill="none" stroke="#50535a" stroke-width="1"/><ellipse cx="1.4" cy="7.6" rx="1.3" ry="0.8" fill="#50535a"/><ellipse cx="5.8" cy="7.6" rx="1.3" ry="0.8" fill="#50535a"/></svg>
<div class="s" style="left:761px;top:380.4px;font-size:12px;line-height:12px;color:#3f3f3f;transform:scale(0.7200,0.7500);">Linux</div>
<div class="s" style="left:847.4px;top:379.78px;font-size:12px;line-height:12px;color:#9a9da3;transform:scale(.75,0.6750);">无</div>
<div class="s" style="left:987px;top:380.4px;font-size:12px;line-height:12px;color:#3f3f3f;transform:scale(0.7500,0.7500);">admin</div>
<div class="s" style="left:1127px;top:379.78px;font-size:12px;line-height:12px;color:#3f3f3f;transform:scale(.75,0.6750);">关</div>
<div class="dots" style="top:376.4px;"></div>
<svg class="a" style="left:1159px;top:381.5px;" width="12" height="4" viewBox="0 0 12 4"><rect x="1.9" y="1.1" width="1.8" height="1.8" rx=".4" fill="#444"/><rect x="5.1" y="1.1" width="1.8" height="1.8" rx=".4" fill="#444"/><rect x="8.3" y="1.1" width="1.8" height="1.8" rx=".4" fill="#444"/></svg>
<div class="a" style="left:1134px;top:193px;width:7.5px;height:205px;background:linear-gradient(to right,rgba(0,0,0,0),rgba(0,0,0,0.07));"></div>
<div class="a" style="left:1141.5px;top:193px;width:1px;height:205px;background:#e9eaed;"></div>
<div class="a" style="left:165.7px;top:398.8px;width:844.5px;height:6px;background:#c6c7cb;border-radius:3px;"></div>
<div class="s" style="left:166px;top:418.58px;font-size:12px;line-height:12px;color:#5a5a5a;transform:scale(.75,0.6750);">第 <span class="lt">1-7</span> 项，共 <span class="lt">7</span> 项</div>
<svg class="a" style="left:1088.5px;top:419px;" width="7" height="9" viewBox="0 0 7 9"><path d="M5 1 L1.5 4.5 L5 8" fill="none" stroke="#b5b8be" stroke-width=".9"/></svg>
<div class="s" style="left:1105.3px;top:418.58px;font-size:12px;line-height:12px;color:#0052d9;transform:scale(.75,0.6750);"><span class="lt">1</span></div>
<svg class="a" style="left:1119px;top:419px;" width="7" height="9" viewBox="0 0 7 9"><path d="M1.5 1 L5 4.5 L1.5 8" fill="none" stroke="#b5b8be" stroke-width=".9"/></svg>
<div class="a" style="left:1132px;top:412.5px;width:56px;height:20px;border:1px solid #dcdde1;border-radius:2px;background:#fff;"></div>
<div class="s" style="left:1137px;top:418.58px;font-size:12px;line-height:12px;color:#3f3f3f;transform:scale(.75,0.6750);"><span class="lt">10</span> 条/页</div>
<svg class="a" style="left:1172.5px;top:420px;" width="8" height="6" viewBox="0 0 8 6"><path d="M1 1.2 L4 4.3 L7 1.2" fill="none" stroke="#b5b8be" stroke-width=".9"/></svg>
<div class="a" style="left:320px;top:256px;width:53px;height:26.4px;background:#4b4c51;border-radius:2px;box-shadow:0 2px 6px rgba(0,0,0,.10),0 4px 18px 6px rgba(0,0,0,.04);"></div>
<svg class="a" style="left:343.5px;top:282px;" width="6" height="4" viewBox="0 0 6 4"><path d="M0 0 L3 3.2 L6 0 Z" fill="#4b4c51"/></svg>
<div class="s" style="left:326.5px;top:267.01px;font-size:11px;line-height:11px;color:#fff;transform:scale(.75,0.6750);">打开控制台</div>
<div class="a" style="left:314px;top:251px;width:66.5px;height:54.5px;border:2px solid #ff1a1a;"></div>
</body></html>
